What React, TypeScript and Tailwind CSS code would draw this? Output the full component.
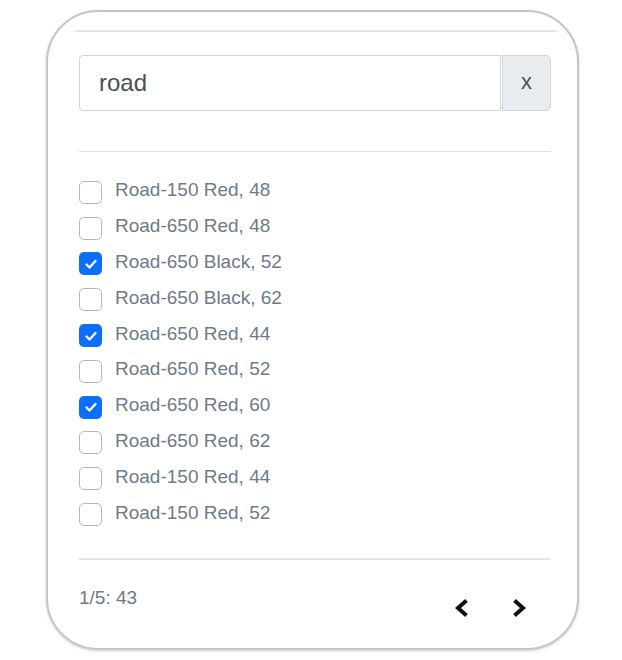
import React, { useState } from 'react';

interface Item {
  label: string;
  checked: boolean;
}

const initialItems: Item[] = [
  { label: 'Road-150 Red, 48', checked: false },
  { label: 'Road-650 Red, 48', checked: false },
  { label: 'Road-650 Black, 52', checked: true },
  { label: 'Road-650 Black, 62', checked: false },
  { label: 'Road-650 Red, 44', checked: true },
  { label: 'Road-650 Red, 52', checked: false },
  { label: 'Road-650 Red, 60', checked: true },
  { label: 'Road-650 Red, 62', checked: false },
  { label: 'Road-150 Red, 44', checked: false },
  { label: 'Road-150 Red, 52', checked: false },
];

const Chevron: React.FC<{ dir: 'left' | 'right' }> = ({ dir }) => (
  <svg width="16" height="24" viewBox="0 0 16 24" fill="none">
    <polyline
      points={dir === 'left' ? '12.5,4.5 4,12 12.5,19.5' : '3.5,4.5 12,12 3.5,19.5'}
      stroke="#111"
      strokeWidth="4"
      strokeLinecap="butt"
      strokeLinejoin="miter"
    />
  </svg>
);

const App: React.FC = () => {
  const [query, setQuery] = useState('road');
  const [items, setItems] = useState(initialItems);

  const toggle = (i: number) =>
    setItems(items.map((it, idx) => (idx === i ? { ...it, checked: !it.checked } : it)));

  return (
    <div className="w-[622px] h-[660px] bg-white pt-[10px] pl-[46px] font-['Liberation_Sans',Arial,sans-serif]">
      <div className="w-[533px] h-[640px] rounded-[52px] border-2 border-[#c6c6c6] shadow-[0_1px_3px_rgba(0,0,0,0.18)] bg-white flex flex-col">
        {/* top divider */}
        <div className="mt-[18px] ml-[27px] mr-[20px] h-[2px] bg-[#e3e6ea]" />

        {/* search */}
        <div className="mt-[23px] ml-[31px] mr-[26px] flex h-[56px]">
          <input
            value={query}
            onChange={(e) => setQuery(e.target.value)}
            className="w-[422px] h-full border border-[#ced4da] rounded-l-[4px] px-[19px] text-[24px] text-[#495057] outline-none"
          />
          <button className="ml-[1px] w-[49px] h-full bg-[#e9ecef] border border-[#ced4da] rounded-r-[5px] text-[22px] text-[#495057] pb-[3px]">
            x
          </button>
        </div>

        <div className="mt-[40px] ml-[31px] mr-[26px] h-[1px] bg-[#dee2e6]" />

        {/* list */}
        <div className="mt-[20px] ml-[31px] flex flex-col">
          {items.map((it, i) => (
            <label key={i} className="h-[35.8px] flex items-center gap-[13px] cursor-pointer">
              <span
                onClick={() => toggle(i)}
                className={
                  it.checked
                    ? 'mt-[5px] w-[23px] h-[23px] rounded-[5px] bg-[#0d6efd] flex items-center justify-center'
                    : 'mt-[5px] w-[23px] h-[23px] rounded-[5px] border-[1.5px] border-[#b3b8bf] bg-white'
                }
              >
                {it.checked && (
                  <svg width="14" height="14" viewBox="0 0 14 14" fill="none">
                    <polyline points="2.5,7.5 5.5,10.5 11.5,4" stroke="#fff" strokeWidth="2.4" strokeLinecap="round" strokeLinejoin="round" />
                  </svg>
                )}
              </span>
              <span className="text-[19px] leading-none text-[#6e7a88]">{it.label}</span>
            </label>
          ))}
        </div>

        <div className="mt-[28px] ml-[31px] mr-[26px] h-[2px] bg-[#e6e6e6]" />

        {/* footer */}
        <div className="ml-[31px] mr-[26px] flex items-start justify-between">
          <span className="mt-[26px] text-[19px] leading-[24px] text-[#6e7a88]">1/5: 43</span>
          <div className="mt-[36px] mr-[24px] flex gap-[41px]">
            <button><Chevron dir="left" /></button>
            <button><Chevron dir="right" /></button>
          </div>
        </div>
      </div>
    </div>
  );
};

export default App;
